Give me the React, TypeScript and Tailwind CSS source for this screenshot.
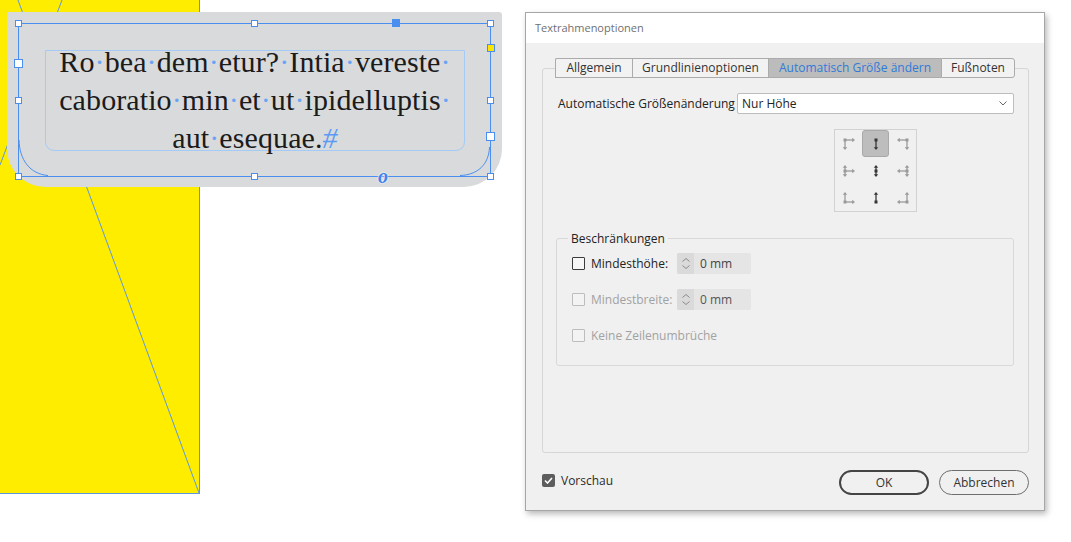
import React from "react";

const Dot = () => <span className="text-[#6aa5f5]">·</span>;

type Dirs = { up?: boolean; down?: boolean; left?: boolean; right?: boolean };

function AnchorIcon({ dirs, dark, sel }: { dirs: Dirs; dark?: boolean; sel?: boolean }) {
  const c = dark ? "#363636" : "#9a9a9a";
  const ax = dirs.left && dirs.right ? 6 : dirs.right ? 2 : dirs.left ? 10 : 6;
  const ay = dirs.up && dirs.down ? 6 : dirs.down ? 2 : dirs.up ? 10 : 6;
  return (
    <div
      className={
        sel
          ? "w-[27px] h-[27px] flex items-center justify-center bg-[#bdbdbd] border border-[#a9a9a9] rounded-[3px]"
          : "w-[27px] h-[27px] flex items-center justify-center"
      }
    >
      <svg width="12" height="12" viewBox="0 0 12 12">
        <rect x={ax - 1.5} y={ay - 1.5} width="3" height="3" fill={c} />
        {dirs.up && (
          <>
            <line x1={ax} y1={ay} x2={ax} y2={2} stroke={c} strokeWidth="1.3" />
            <polygon points={`${ax},0 ${ax - 2.2},2.8 ${ax + 2.2},2.8`} fill={c} />
          </>
        )}
        {dirs.down && (
          <>
            <line x1={ax} y1={ay} x2={ax} y2={10} stroke={c} strokeWidth="1.3" />
            <polygon points={`${ax},12 ${ax - 2.2},9.2 ${ax + 2.2},9.2`} fill={c} />
          </>
        )}
        {dirs.left && (
          <>
            <line x1={ax} y1={ay} x2={2} y2={ay} stroke={c} strokeWidth="1.3" />
            <polygon points={`0,${ay} 2.8,${ay - 2.2} 2.8,${ay + 2.2}`} fill={c} />
          </>
        )}
        {dirs.right && (
          <>
            <line x1={ax} y1={ay} x2={10} y2={ay} stroke={c} strokeWidth="1.3" />
            <polygon points={`12,${ay} 9.2,${ay - 2.2} 9.2,${ay + 2.2}`} fill={c} />
          </>
        )}
      </svg>
    </div>
  );
}

function SpinField({ disabled }: { disabled?: boolean }) {
  return (
    <div className="w-[74px] h-[21px] flex bg-[#e5e5e5] rounded-[2px]">
      <div className="w-[17px] h-full bg-[#dadada] rounded-l-[2px] flex flex-col items-center justify-center gap-[3px]">
        <svg width="8" height="4" viewBox="0 0 8 4">
          <polyline points="0.5,3.5 4,0.5 7.5,3.5" fill="none" stroke="#8a8a8a" strokeWidth="1" />
        </svg>
        <svg width="8" height="4" viewBox="0 0 8 4">
          <polyline points="0.5,0.5 4,3.5 7.5,0.5" fill="none" stroke="#8a8a8a" strokeWidth="1" />
        </svg>
      </div>
      <div className={disabled ? "pl-[6px] flex items-center text-[#555]" : "pl-[6px] flex items-center text-[#444]"}>0 mm</div>
    </div>
  );
}

export default function App() {
  return (
    <div className="relative w-[1071px] h-[542px] bg-white overflow-hidden">
      {/* Canvas: yellow page object */}
      <div className="absolute left-0 top-0 w-[200px] h-[494px] bg-[#ffed00] border-r border-b border-[#5b96e0]" />
      <svg className="absolute left-0 top-0" width="200" height="494" viewBox="0 0 200 494">
        <line x1="18" y1="0" x2="199" y2="493" stroke="#5b96e0" strokeWidth="1" />
        <line x1="62" y1="0" x2="0" y2="165" stroke="#5b96e0" strokeWidth="1" />
      </svg>

      {/* Gray text frame */}
      <div className="absolute left-[7px] top-[12px] w-[495px] h-[175px] bg-[#d9dadb] rounded-tr-[3px] rounded-bl-[38px] rounded-br-[38px]" />

      {/* Inner text frame */}
      <div className="absolute left-[45px] top-[50px] w-[420px] h-[101px] border border-[#a4cbf7] rounded-b-[9px]" />

      {/* Text */}
      <div className="absolute left-[45px] top-[43px] w-[420px] text-center font-['Liberation_Serif',serif] text-[30px] leading-[38px] tracking-[0.1px] text-[#1b1b1b]">
        <div>
          Ro<Dot />bea<Dot />dem<Dot />etur?<Dot />Intia<Dot />vereste<Dot />
        </div>
        <div>
          caboratio<Dot />min<Dot />et<Dot />ut<Dot />ipidelluptis<Dot />
        </div>
        <div>
          aut<Dot />esequae.<span className="text-[#5b9bf5] italic">#</span>
        </div>
      </div>

      {/* Selection frame */}
      <div className="absolute left-[18px] top-[23px] w-[473px] h-[154px] border border-[#4a8ff0]" />
      <svg className="absolute left-0 top-0" width="510" height="200" viewBox="0 0 510 200">
        <path d="M19 140 C 19.5 160 30 174 48 175.5" fill="none" stroke="#4a8ff0" strokeWidth="1" />
        <path d="M489.5 147 C 489 164 478 175 460 175.5" fill="none" stroke="#4a8ff0" strokeWidth="1" />
      </svg>

      {/* Handles */}
      <div className="absolute left-[15px] top-[20px] w-[7px] h-[7px] bg-white border border-[#4a8ff0]" />
      <div className="absolute left-[251px] top-[20px] w-[7px] h-[7px] bg-white border border-[#4a8ff0]" />
      <div className="absolute left-[392px] top-[19px] w-[8px] h-[8px] bg-[#4a8ff0]" />
      <div className="absolute left-[487px] top-[20px] w-[7px] h-[7px] bg-white border border-[#4a8ff0]" />
      <div className="absolute left-[14px] top-[59px] w-[9px] h-[9px] bg-white border border-[#4a8ff0]" />
      <div className="absolute left-[15px] top-[97px] w-[7px] h-[7px] bg-white border border-[#4a8ff0]" />
      <div className="absolute left-[15px] top-[173px] w-[7px] h-[7px] bg-white border border-[#4a8ff0]" />
      <div className="absolute left-[251px] top-[173px] w-[7px] h-[7px] bg-white border border-[#4a8ff0]" />
      <div className="absolute left-[487px] top-[173px] w-[7px] h-[7px] bg-white border border-[#4a8ff0]" />
      <div className="absolute left-[487px] top-[44px] w-[8px] h-[8px] bg-[#ffe400] border border-[#4a8ff0]" />
      <div className="absolute left-[487px] top-[97px] w-[7px] h-[7px] bg-white border border-[#4a8ff0]" />
      <div className="absolute left-[486px] top-[132px] w-[9px] h-[9px] bg-white border border-[#4a8ff0]" />
      <div className="absolute left-[375px] top-[165px] w-[16px] h-[22px] flex items-center justify-center font-['Liberation_Serif',serif] italic font-bold text-[20px] leading-none text-[#3f84ea] [text-shadow:0_0_2px_#fff,0_0_1px_#fff]">
        o
      </div>

      {/* Dialog */}
      <div className="absolute left-[525px] top-[12px] w-[520px] h-[499px] border border-[#a6a6a6] bg-[#f0f0f0] shadow-[2px_3px_6px_rgba(0,0,0,0.28)] flex flex-col font-['Open_Sans',sans-serif] text-[12px] text-[#2b2b2b]">
        <div className="h-[30px] bg-white flex items-center pl-[9px] text-[11px] text-[#707070]">Textrahmenoptionen</div>
        <div className="flex-1 flex flex-col pt-[15px] pl-[16px] pr-[15px]">
          {/* Tabs */}
          <div className="flex h-[20px] pl-[13px] relative z-10">
            <div className="w-[77px] h-full flex items-center justify-center border-y border-l border-[#ababab] rounded-tl-[2px] bg-[#f2f2f2] text-[#333]">
              Allgemein
            </div>
            <div className="w-[136px] h-full flex items-center justify-center border-y border-l border-[#ababab] bg-[#f2f2f2] text-[#333]">
              Grundlinienoptionen
            </div>
            <div className="w-[173px] h-full flex items-center justify-center border-y border-l border-[#ababab] bg-[#bcbcbc] text-[#2f7bd8]">
              Automatisch Größe ändern
            </div>
            <div className="w-[74px] h-full flex items-center justify-center border border-[#ababab] rounded-r-[3px] bg-[#f2f2f2] text-[#333]">
              Fußnoten
            </div>
          </div>
          <div className="-mt-[10px] h-[385px] border border-[#d6d6d6] rounded-[3px] flex flex-col pt-[24px] pl-[13px] pr-[14px]">
            <div className="flex items-center h-[21px]">
              <span className="ml-[2px] text-[#222]">Automatische Größenänderung</span>
              <div className="ml-auto w-[277px] h-[21px] bg-white border border-[#bdbdbd] rounded-[2px] flex items-center pl-[4px] pr-[6px] text-[#222]">
                <span>Nur Höhe</span>
                <svg className="ml-auto" width="8" height="5" viewBox="0 0 8 5">
                  <polyline points="0.5,0.5 4,4 7.5,0.5" fill="none" stroke="#666" strokeWidth="1" />
                </svg>
              </div>
            </div>
            <div className="self-end w-[277px] flex justify-center mt-[15px]">
              <div className="w-[83px] h-[83px] border border-[#d2d2d2] grid grid-cols-3 grid-rows-3">
                <AnchorIcon dirs={{ right: true, down: true }} />
                <AnchorIcon dirs={{ down: true }} dark sel />
                <AnchorIcon dirs={{ left: true, down: true }} />
                <AnchorIcon dirs={{ up: true, down: true, right: true }} />
                <AnchorIcon dirs={{ up: true, down: true }} dark />
                <AnchorIcon dirs={{ up: true, down: true, left: true }} />
                <AnchorIcon dirs={{ up: true, right: true }} />
                <AnchorIcon dirs={{ up: true }} dark />
                <AnchorIcon dirs={{ up: true, left: true }} />
              </div>
            </div>
            <fieldset className="mt-[18px] h-[136px] border border-[#d8d8d8] rounded-[3px] pl-[15px]">
              <legend className="-ml-[4px] px-[3px] text-[#222] leading-[17px]">Beschränkungen</legend>
              <div className="flex flex-col gap-[15px] mt-[6px]">
                <div className="flex items-center h-[21px]">
                  <div className="w-[13px] h-[13px] border border-[#3c3c3c] rounded-[1px] bg-[#f7f7f7]" />
                  <span className="ml-[6px] w-[86px] text-[#222]">Mindesthöhe:</span>
                  <SpinField />
                </div>
                <div className="flex items-center h-[21px]">
                  <div className="w-[13px] h-[13px] border border-[#bdbdbd] rounded-[1px] bg-[#f3f3f3]" />
                  <span className="ml-[6px] w-[86px] text-[#a2a2a2]">Mindestbreite:</span>
                  <SpinField disabled />
                </div>
                <div className="flex items-center h-[21px]">
                  <div className="w-[13px] h-[13px] border border-[#bdbdbd] rounded-[1px] bg-[#f3f3f3]" />
                  <span className="ml-[6px] text-[#a2a2a2]">Keine Zeilenumbrüche</span>
                </div>
              </div>
            </fieldset>
          </div>
          {/* Footer */}
          <div className="mt-[17px] h-[25px] flex items-start">
            <div className="mt-[2px] h-[17px] flex items-center">
              <div className="w-[13px] h-[13px] rounded-[2px] bg-[#5d5d5d] flex items-center justify-center">
                <svg width="9" height="7" viewBox="0 0 9 7">
                  <polyline points="1,3.5 3.5,6 8,1" fill="none" stroke="#fff" strokeWidth="1.6" />
                </svg>
              </div>
              <span className="ml-[6px] text-[#2b2b2b]">Vorschau</span>
            </div>
            <button className="ml-auto w-[90px] h-[25px] rounded-full border-2 border-[#444] bg-[#f0f0f0] text-[#333] flex items-center justify-center">
              OK
            </button>
            <button className="ml-[10px] w-[90px] h-[25px] rounded-full border border-[#6e6e6e] bg-[#f0f0f0] text-[#333] flex items-center justify-center">
              Abbrechen
            </button>
          </div>
        </div>
      </div>
    </div>
  );
}
